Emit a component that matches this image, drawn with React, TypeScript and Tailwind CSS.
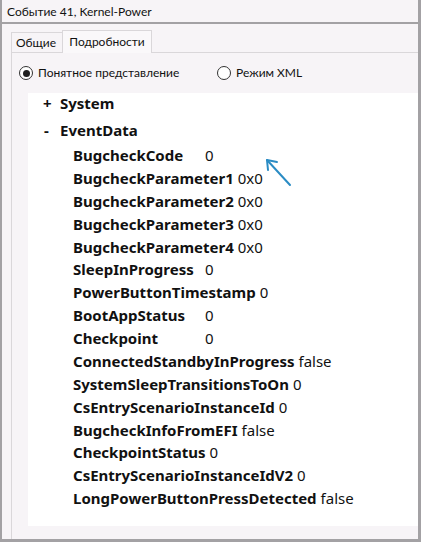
import React from "react";

const rows: [string, string][] = [
  ["BugcheckCode", "0"],
  ["BugcheckParameter1", "0x0"],
  ["BugcheckParameter2", "0x0"],
  ["BugcheckParameter3", "0x0"],
  ["BugcheckParameter4", "0x0"],
  ["SleepInProgress", "0"],
  ["PowerButtonTimestamp", "0"],
  ["BootAppStatus", "0"],
  ["Checkpoint", "0"],
  ["ConnectedStandbyInProgress", "false"],
  ["SystemSleepTransitionsToOn", "0"],
  ["CsEntryScenarioInstanceId", "0"],
  ["BugcheckInfoFromEFI", "false"],
  ["CheckpointStatus", "0"],
  ["CsEntryScenarioInstanceIdV2", "0"],
  ["LongPowerButtonPressDetected", "false"],
];

function Radio({ checked }: { checked?: boolean }) {
  return (
    <span className="w-[14px] h-[14px] rounded-full border border-[#333] bg-white flex items-center justify-center shrink-0">
      {checked && <span className="w-[7px] h-[7px] rounded-full bg-[#1f1f1f]" />}
    </span>
  );
}

export default function App() {
  return (
    <div
      className="relative w-[421px] h-[542px] bg-[#f7f4f7] border-l-2 border-r-[3px] border-b-[3px] border-[#a3a1a4] flex flex-col text-[12px] text-[#111]"
      style={{ fontFamily: "Lato, sans-serif" }}
    >
      {/* заголовок */}
      <div className="h-[22px] pl-[5px] flex items-center pt-[2px]">Событие 41, Kernel-Power</div>
      <div className="h-[2px] bg-[#a3a1a4]" />

      {/* вкладки */}
      <div className="h-[28px] flex items-end pl-[9px]">
        <div className="w-[51px] h-[20px] border-t border-l border-[#dad7da] flex items-center justify-center pr-[2px]">
          Общие
        </div>
        <div className="w-[90px] h-[23px] -mb-px border-t border-l border-r border-[#dad7da] bg-[#faf8fa] flex items-center justify-center relative z-10 pb-[1px]">
          Подробности
        </div>
      </div>

      {/* содержимое */}
      <div className="flex-1 ml-[9px] border-t border-l border-[#dad7da] flex flex-col pb-[13px]">
        <div className="h-[40px] flex items-center">
          <div className="w-[205px] pl-[7px] flex items-center gap-[5px]">
            <Radio checked />
            <span>Понятное представление</span>
          </div>
          <div className="flex items-center gap-[5px]">
            <Radio />
            <span>Режим XML</span>
          </div>
        </div>

        <div
          className="flex-1 ml-[16px] bg-white pl-[15px] text-[15px]"
          style={{ fontFamily: '"Noto Sans", sans-serif' }}
        >
          <div className="flex leading-[20px] font-bold">
            <span className="w-[17px]">+</span>
            <span>System</span>
          </div>
          <div className="flex leading-[20px] font-bold mt-[7px]">
            <span className="w-[17px] pl-[1px]">-</span>
            <span>EventData</span>
          </div>
          <div className="mt-[4px] pl-[30px]">
            {rows.map(([name, value]) => (
              <div key={name} className="flex leading-[22.87px]">
                <span className="min-w-[132px] pr-[4px] font-bold">{name}</span>
                <span>{value}</span>
              </div>
            ))}
          </div>
        </div>
      </div>

      {/* стрелка */}
      <svg className="absolute left-0 top-0 pointer-events-none" width="421" height="542">
        <g stroke="#2b8cc4" strokeWidth="2" fill="none" strokeLinecap="round" strokeLinejoin="round">
          <line x1="288" y1="185" x2="265" y2="160" />
          <polyline points="275,162 265,160 266,170" />
        </g>
      </svg>
    </div>
  );
}
